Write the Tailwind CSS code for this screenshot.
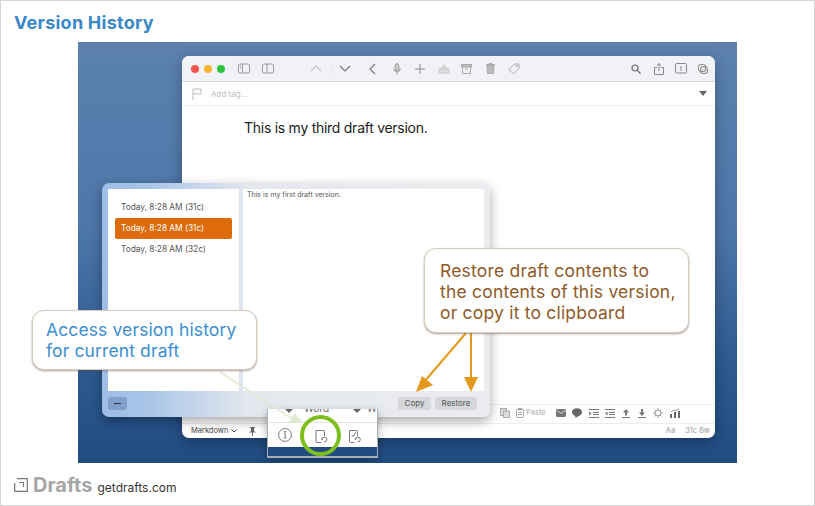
<!DOCTYPE html>
<html><head><meta charset="utf-8"><script src="https://cdn.jsdelivr.net/npm/@tailwindcss/browser@4"></script></head>
<body class="m-0 bg-white">
<div class="relative w-[815px] h-[506px] overflow-hidden bg-white border border-[#d4d4d4] font-['Inter','Liberation_Sans',sans-serif]">
  <h1 class="absolute left-[13px] top-[12px] text-[18px] leading-[20px] tracking-[0.25px] font-bold text-[#3a88c8]">Version History</h1>

  <!-- screenshot -->
  <div class="absolute left-[77px] top-[41px] w-[659px] h-[421px] overflow-hidden bg-[linear-gradient(180deg,#5c81af_0%,#4d76a8_45%,#2f5b92_75%,#214c82_100%)]">
    <!-- main window -->
    <div class="absolute left-[104px] top-[14px] w-[533px] h-[382px] bg-white rounded-[7px] flex flex-col overflow-hidden shadow-[0_4px_14px_rgba(0,0,0,0.3)]">
      <div class="h-[26px] shrink-0 bg-[#f1f2f6] border-b border-[#d5d7dc] flex items-center pl-[9px] text-[#7d7d7d]">
        <span class="w-[8px] h-[8px] rounded-full bg-[#f4544e]"></span>
        <span class="w-[8px] h-[8px] rounded-full bg-[#f6b62e] ml-[5px]"></span>
        <span class="w-[8px] h-[8px] rounded-full bg-[#2cc53f] ml-[5px]"></span>
        <svg class="ml-[13px]" width="12" height="11" viewBox="0 0 12 11" fill="none" stroke="#999"><rect x=".5" y="1" width="11" height="9" rx="1.500"/><path d="M4.500 1v9M2 3h1M2 5h1"/></svg>
        <svg class="ml-[12px]" width="12" height="11" viewBox="0 0 12 11" fill="none" stroke="#999"><rect x=".5" y="1" width="11" height="9" rx="1.500"/><path d="M5 1v9"/></svg>
        <svg class="ml-[36px]" width="12" height="7" viewBox="0 0 12 7" fill="none" stroke="#c4c4c4" stroke-width="1.200"><path d="M1 6l5-5 5 5"/></svg>
        <span class="w-px h-[12px] bg-[#e6e7ea] ml-[9px]"></span>
        <svg class="ml-[7px]" width="12" height="7" viewBox="0 0 12 7" fill="none" stroke="#777" stroke-width="1.200"><path d="M1 1l5 5 5-5"/></svg>
        <svg class="ml-[18px]" width="7" height="12" viewBox="0 0 7 12" fill="none" stroke="#777" stroke-width="1.200"><path d="M6 1L1 6l5 5"/></svg>
        <svg class="ml-[17px]" width="8" height="12" viewBox="0 0 8 12" fill="none" stroke="#999"><rect x="2.200" y=".7" width="3.600" height="7" rx="1.800" fill="#ccc"/><path d="M.7 5.500a3.300 3.300 0 006.600 0M4 9v2.500"/></svg>
        <svg class="ml-[14px]" width="10" height="10" viewBox="0 0 10 10" stroke="#888"><path d="M5 0v10M0 5h10"/></svg>
        <svg class="ml-[13px]" width="12" height="10" viewBox="0 0 12 10" fill="#ddd" stroke="#c8c8c8"><path d="M1 5h10v4H1zM3 5l1-2h4l1 2"/><path d="M6 0v3" fill="none"/></svg>
        <svg class="ml-[11px]" width="11" height="10" viewBox="0 0 11 10" fill="none" stroke="#aaa"><rect x=".5" y=".5" width="10" height="2.500" fill="#bbb"/><path d="M1.500 3v6.500h8V3M4 5h3"/></svg>
        <svg class="ml-[14px]" width="9" height="11" viewBox="0 0 9 11" fill="#bbb" stroke="#aaa"><path d="M1 2.500h7l-.6 8H1.600zM0 1.500h9M3 1.500V.5h3v1"/></svg>
        <svg class="ml-[13px]" width="12" height="12" viewBox="0 0 12 12" fill="none" stroke="#aaa"><path d="M6.500 1H11v4.500L5.500 11 1 6.500z"/><circle cx="8.800" cy="3.200" r=".7"/></svg>
        <svg class="ml-[111px]" width="10" height="10" viewBox="0 0 10 10" fill="none" stroke="#666" stroke-width="1.200"><circle cx="4" cy="4" r="3"/><path d="M6.300 6.300L9.500 9.500"/></svg>
        <svg class="ml-[13px]" width="10" height="12" viewBox="0 0 10 12" fill="none" stroke="#888"><path d="M3 4.500H.5v7h9v-7H7M5 8V.8M3 2.500L5 .6l2 1.900"/></svg>
        <svg class="ml-[11px]" width="12" height="11" viewBox="0 0 12 11" fill="none" stroke="#888"><rect x=".5" y=".5" width="11" height="9.500" rx="1"/><path d="M6 3v5"/></svg>
        <svg class="ml-[11px]" width="10" height="10" viewBox="0 0 10 10" fill="none" stroke="#888"><rect x="2.500" y="2.500" width="7" height="7" rx="2" fill="#ddd"/><rect x=".5" y=".5" width="7" height="7" rx="2"/></svg>
      </div>
      <div class="h-[24px] shrink-0 border-b border-[#eeeeee] flex items-center pl-[10px] pr-[8px]">
        <svg width="10" height="12" viewBox="0 0 10 12" fill="none" stroke="#bbb"><path d="M1 12V1h8v5H1"/></svg>
        <span class="ml-[9px] text-[8px] text-[#c0c0c0]">Add tag...</span>
        <svg class="ml-auto" width="8" height="5" viewBox="0 0 8 5" fill="#666"><path d="M0 0h8L4 5z"/></svg>
      </div>
      <p class="ml-[62px] mt-[13px] text-[14px] leading-[17px] tracking-[-0.27px] text-[#1c1c1c]">This is my third draft version.</p>
      <div class="mt-auto h-[19px] shrink-0 border-t border-[#eeeeee]"></div>
      <div class="h-[15px] shrink-0 flex items-center border-t border-[#eeeeee] pl-[9px] pr-[5px] text-[7.500px] text-[#444]">
        <span>Markdown</span>
        <svg class="ml-[3px]" width="6" height="4" viewBox="0 0 6 4" fill="none" stroke="#444"><path d="M.5.500L3 3 5.500.500"/></svg>
        <svg class="ml-[12px]" width="7" height="9" viewBox="0 0 7 9" fill="#666"><path d="M1 0h5v1H5v3l2 1.500H4V9H3V5.500H0L2 4V1H1z"/></svg>
        <span class="ml-auto text-[#999]">Aa</span><span class="ml-[10px] text-[#999]">31c 6w</span>
      </div>
    </div>

    <!-- bottom toolbar icons, over the window -->
    <div class="absolute left-[422px] top-[366px] flex items-center text-[#999]">
      <svg width="10" height="10" viewBox="0 0 10 10" fill="#ddd" stroke="#999" stroke-width=".8"><rect x=".5" y=".5" width="6" height="7"/><rect x="3.500" y="3" width="6" height="6.500"/></svg>
      <svg class="ml-[6px]" width="8" height="10" viewBox="0 0 8 10" fill="none" stroke="#999" stroke-width=".9"><rect x=".5" y="1.200" width="7" height="8.300" rx="1"/><path d="M2.500 .5h3v1.500h-3zM2 4.500h4M2 6.500h4"/></svg>
      <span class="ml-[2px] text-[7.500px] leading-[10px] text-[#aaa]">Paste</span>
      <svg class="ml-[10px]" width="10" height="8" viewBox="0 0 10 8" fill="#777"><rect width="10" height="8" rx="1.500"/><path d="M1 1.500l4 3 4-3" fill="none" stroke="#eee" stroke-width=".8"/></svg>
      <svg class="ml-[6px]" width="10" height="10" viewBox="0 0 10 10" fill="#666"><ellipse cx="5" cy="4.200" rx="5" ry="4"/><path d="M3 7l.5 3L6.500 8z"/></svg>
      <svg class="ml-[7px]" width="10" height="9" viewBox="0 0 10 9" fill="none" stroke="#777"><path d="M0 .5h10M4 3.500h6M4 5.500h6M0 8.500h10"/><path d="M0 2.500l2.500 2-2.500 2z" fill="#777" stroke="none"/></svg>
      <svg class="ml-[6px]" width="10" height="9" viewBox="0 0 10 9" fill="none" stroke="#777"><path d="M0 .5h10M4 3.500h6M4 5.500h6M0 8.500h10"/><path d="M2.500 2.500L0 4.500l2.500 2z" fill="#777" stroke="none"/></svg>
      <svg class="ml-[7px]" width="8" height="9" viewBox="0 0 8 9" fill="#777"><path d="M4 0l3 3.500H5V6.500H3V3.500H1zM0 8h8v1H0z"/></svg>
      <svg class="ml-[8px]" width="8" height="9" viewBox="0 0 8 9" fill="#777"><path d="M3 0h2v3.500h2L4 7 1 3.500h2zM0 8h8v1H0z"/></svg>
      <svg class="ml-[7px]" width="10" height="10" viewBox="0 0 10 10" fill="none" stroke="#888" stroke-width=".9"><circle cx="5" cy="5" r="3"/><path d="M5 0v1.500M5 8.500V10M0 5h1.500M8.500 5H10M1.500 1.500l1 1M7.500 7.500l1 1M1.500 8.500l1-1M7.500 2.500l1-1"/></svg>
      <svg class="ml-[7px]" width="10" height="10" viewBox="0 0 10 10" fill="#666"><path d="M0 6h2v4H0zM4 4h2v6H4zM8 3h2v7H8z"/><path d="M1 4l3-2 2 1 3-2.500" fill="none" stroke="#666" stroke-width=".7"/></svg>
    </div>

    <!-- version history sheet -->
    <div class="absolute left-[24px] top-[141px] w-[388px] h-[234px] rounded-[7px] p-[6px] flex flex-col gap-[4px] bg-[linear-gradient(90deg,#9dbde6_0%,#a9c5e8_12%,#e4e8ee_38%,#ebecef_100%)] shadow-[0_4px_12px_rgba(0,0,0,0.35)]">
      <div class="flex gap-[4px] h-[202px]">
        <div class="w-[131px] bg-white flex flex-col pt-[8px] pl-[7px] pr-[7px] text-[8.300px]">
          <div class="h-[21px] leading-[21px] pl-[6px] text-[#555]">Today, 8:28 AM (31c)</div>
          <div class="h-[21px] leading-[21px] pl-[6px] rounded-[2px] bg-[#dd6b09] text-white">Today, 8:28 AM (31c)</div>
          <div class="h-[21px] leading-[21px] pl-[6px] text-[#555]">Today, 8:28 AM (32c)</div>
        </div>
        <div class="flex-1 bg-white px-[4px] text-[7px] leading-[11px] text-[#555]">This is my first draft version.</div>
      </div>
      <div class="flex items-center h-[14px] mt-[1px]">
        <button class="w-[19px] h-[13px] rounded-[3px] bg-[#7fa0cc] flex items-center justify-center"><span class="w-[7px] h-px bg-[#333]"></span></button>
        <button class="ml-auto w-[33px] h-[13px] rounded-[3px] bg-[#d6d7da] text-[8px] leading-[13px] text-[#555]">Copy</button>
        <button class="ml-[4px] mr-[7px] w-[42px] h-[13px] rounded-[3px] bg-[#d6d7da] text-[8px] leading-[13px] text-[#555]">Restore</button>
      </div>
    </div>

    <!-- popover -->
    <div class="absolute left-[189px] top-[367px] w-[111px] h-[49px] overflow-hidden border-x border-b-2 border-[#a8aeb6] shadow-[0_3px_8px_rgba(0,0,0,0.3)] flex flex-col">
      <div class="h-[38px] bg-white relative shrink-0 overflow-hidden">
        <div class="h-[14px] border-b border-[#e4e4e4]"></div>
        <span class="absolute left-[36px] -top-[6px] text-[10px] leading-[11px] text-[#666]">Word</span>
        <svg class="absolute left-[17px] top-0" width="8" height="4" viewBox="0 0 8 4" fill="#666"><path d="M0 0h8L4 4z"/></svg>
        <svg class="absolute left-[85px] top-0" width="8" height="4" viewBox="0 0 8 4" fill="#666"><path d="M0 0h8L4 4z"/></svg>
        <span class="absolute left-[99px] -top-[6px] text-[10px] leading-[11px] text-[#666]">W</span>
        <svg class="absolute left-[10px] top-[19px]" width="14" height="14" viewBox="0 0 14 14" fill="none" stroke="#555" stroke-width=".8"><circle cx="7" cy="7" r="6.400"/><path d="M6 5.800h1.200v4M5.800 10h2.600" /><circle cx="7" cy="3.800" r=".5" fill="#555"/></svg>
        <svg class="absolute left-[47px] top-[20px]" width="13" height="15" viewBox="0 0 13 15" fill="none" stroke="#555" stroke-width=".8"><path d="M6 13.500H2a1 1 0 01-1-1v-11h7.500a1 1 0 011 1V7"/><path d="M7 10.500a2.400 2.400 0 112 2.400M7 10.500l-1-.8M7 10.500l1-.8"/></svg>
        <svg class="absolute left-[81px] top-[20px]" width="12" height="15" viewBox="0 0 12 15" fill="none" stroke="#555" stroke-width=".8"><path d="M5 13.500H1.500a1 1 0 01-1-1v-11h7a1 1 0 011 1V7"/><path d="M2.500 6l1.500 1.500L7 3.500"/><path d="M6.500 10.500a2.400 2.400 0 112 2.400M6.500 10.500l-1-.8M6.500 10.500l1-.8"/></svg>
      </div>
    </div>

    <!-- connector + arrows -->
    <svg class="absolute left-0 top-0" width="659" height="421" viewBox="0 0 659 421" fill="none">
      <path d="M142 330L216 378" stroke="#dfead0" stroke-width="1.500"/>
      <path d="M225 381h-15l7-10z" fill="#dfead0"/>
      <path d="M388 291L346 340" stroke="#e4991c" stroke-width="2"/>
      <path d="M338 350l17-7-11-9z" fill="#e4991c"/>
      <path d="M393 291L393 338" stroke="#e4991c" stroke-width="2"/>
      <path d="M386 335h14l-7 15z" fill="#e4991c"/>
    </svg>
    <div class="absolute left-[222px] top-[373px] w-[41px] h-[41px] rounded-full border-[4.500px] border-[#7ebf1f]"></div>
  </div>

  <!-- callouts -->
  <div class="absolute left-[31px] top-[309px] w-[225px] h-[60px] rounded-[12px] bg-white border border-[#d8cabd] shadow-[0_1px_2px_rgba(90,70,50,0.5)] pl-[13px] pt-[8px] text-[17.500px] leading-[21px] tracking-[0.12px] text-[#3b8ed0]">Access version history<br>for current draft</div>
  <div class="absolute left-[423px] top-[247px] w-[265px] h-[85px] rounded-[12px] bg-white border border-[#d8cabd] shadow-[0_1px_2px_rgba(90,70,50,0.5)] pl-[15px] pt-[11px] text-[17.500px] leading-[21px] tracking-[0.2px] text-[#8f5a28]">Restore draft contents to<br>the contents of this version,<br>or copy it to clipboard</div>

  <!-- footer -->
  <div class="absolute left-[13px] top-[471px] flex items-center h-[26px]">
    <svg width="14" height="14" viewBox="0 0 14 14" fill="none" stroke="#777" stroke-width="1.200"><path d="M3 .7h10.300V13.300H.7V5"/><path d="M5 4.500h4.500V9"/></svg>
    <span class="ml-[5px] text-[20px] leading-[26px] font-bold text-[#a6a6a6]">Drafts</span>
    <span class="ml-[5px] mt-[6px] text-[12px] text-[#333]">getdrafts.com</span>
  </div>
</div>
</body></html>
